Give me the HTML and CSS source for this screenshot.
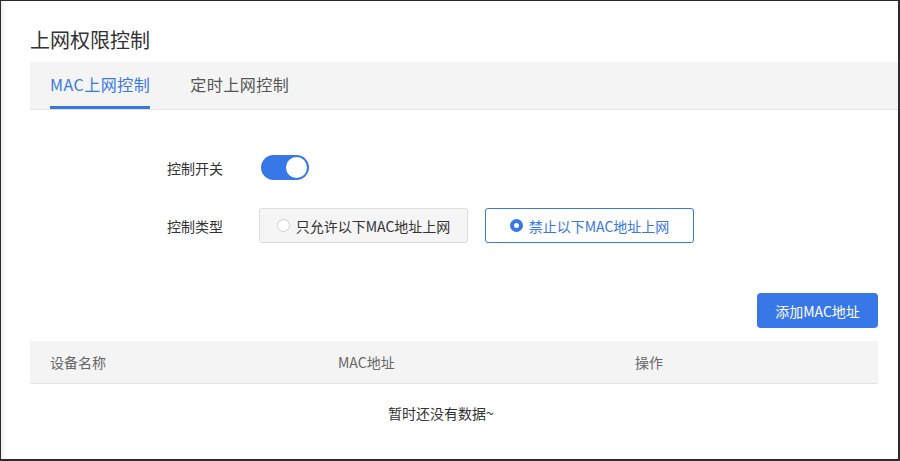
FILE: index.html
```html
<!DOCTYPE html>
<html lang="zh-CN">
<head>
  <meta charset="UTF-8">
  <title>上网权限控制</title>
  <link rel="stylesheet" href="styles.css">
</head>
<body>
  <div class="page">
    <h2 class="title">上网权限控制</h2>

    <div class="tabs">
      <div class="tab active">MAC上网控制</div>
      <div class="tab">定时上网控制</div>
    </div>

    <div class="form">
      <div class="form-row">
        <span class="label">控制开关</span>
        <div class="switch on"><span class="knob"></span></div>
      </div>
      <div class="form-row">
        <span class="label">控制类型</span>
        <div class="radio-group">
          <div class="radio-btn"><span class="dot"></span>只允许以下MAC地址上网</div>
          <div class="radio-btn checked"><span class="dot"></span>禁止以下MAC地址上网</div>
        </div>
      </div>
    </div>

    <div class="toolbar">
      <button class="btn-primary">添加MAC地址</button>
    </div>

    <div class="table">
      <div class="table-head">
        <div class="col col-name">设备名称</div>
        <div class="col col-mac">MAC地址</div>
        <div class="col">操作</div>
      </div>
      <div class="table-empty">暂时还没有数据~</div>
    </div>
  </div>
</body>
</html>
```

FILE: styles.css
```css
* {
  box-sizing: border-box;
  margin: 0;
  padding: 0;
}

html, body {
  height: 100%;
}

body {
  font-family: "Microsoft YaHei", "Noto Sans CJK SC", "Noto Sans", sans-serif;
  font-size: 14px;
  color: #333;
  background: #fff;
  border-top: 1px solid #2c2c2c;
  border-left: 1px solid #2c2c2c;
  border-right: 2px solid #2c2c2c;
  border-bottom: 2px solid #2c2c2c;
  box-shadow: inset 5px 0 5px -3px rgba(0,0,0,0.08);
  overflow: hidden;
}

.page {
  padding: 0 20px 0 29px;
}

.title {
  font-size: 20px;
  font-weight: normal;
  line-height: 28px;
  padding-top: 25px;
  margin-bottom: 8px;
  color: #333;
}

.tabs {
  display: flex;
  gap: 40px;
  height: 48px;
  margin-right: -20px;
  padding-left: 20px;
  background: #f4f4f4;
  border-bottom: 1px solid #e4e4e4;
}

.tab {
  font-size: 16px;
  letter-spacing: 0.5px;
  line-height: 45px;
  color: #555;
  border-bottom: 3px solid transparent;
}

.tab.active {
  color: #3777e8;
  border-bottom-color: #3777e8;
}

.form {
  padding: 45px 0 0 137px;
}

.form-row {
  display: flex;
  align-items: center;
  margin-bottom: 28px;
}

.label {
  width: 92px;
  font-size: 14px;
  color: #333;
}

.switch {
  position: relative;
  width: 48px;
  height: 25px;
  margin-left: 2px;
  border-radius: 13px;
  background: #ccc;
}

.switch.on {
  background: #3777e8;
}

.knob {
  position: absolute;
  top: 2px;
  right: 2px;
  width: 21px;
  height: 21px;
  border-radius: 50%;
  background: #fff;
}

.radio-group {
  display: flex;
  gap: 17px;
}

.radio-btn {
  display: flex;
  align-items: center;
  justify-content: center;
  gap: 6px;
  width: 209px;
  height: 35px;
  font-size: 14px;
  color: #333;
  background: #f5f5f5;
  border: 1px solid #dcdcdc;
  border-radius: 3px;
}

.dot {
  width: 13px;
  height: 13px;
  border-radius: 50%;
  border: 1px solid #cfcfcf;
  background: #fff;
}

.radio-btn.checked {
  color: #3777e8;
  background: #fff;
  border-color: #3777e8;
}

.radio-btn.checked .dot {
  border: 4px solid #3777e8;
}

.toolbar {
  display: flex;
  justify-content: flex-end;
  padding-top: 22px;
  margin-bottom: 13px;
}

.btn-primary {
  width: 121px;
  height: 35px;
  font-family: inherit;
  font-size: 14px;
  color: #fff;
  background: #3777e8;
  border: none;
  border-radius: 4px;
  cursor: pointer;
}

.table-head {
  display: flex;
  height: 43px;
  align-items: center;
  background: #f4f4f4;
  border-bottom: 1px solid #e4e4e4;
  color: #666;
  font-size: 14px;
}

.col {
  padding-left: 20px;
}

.col-name {
  width: 288px;
}

.col-mac {
  width: 297px;
}

.table-empty {
  padding: 19px 26px 0 0;
  text-align: center;
  font-size: 14px;
  color: #333;
}
```
